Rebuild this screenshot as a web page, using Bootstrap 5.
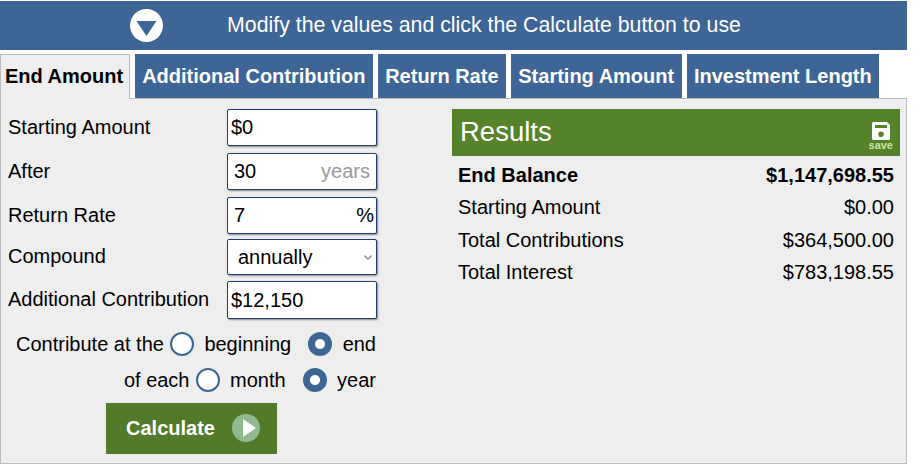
<!DOCTYPE html>
<html lang="en"><head><meta charset="utf-8"><title>Investment Calculator</title>
<link href="https://cdn.jsdelivr.net/npm/bootstrap@5.3.0/dist/css/bootstrap.min.css" rel="stylesheet">
<style>
html,body{background:#fff}
body{font-family:"Liberation Sans",Arial,sans-serif;font-size:20px;color:#000;width:907px;padding-top:1px;overflow:hidden}
.banner{background:#3d6595;color:#fff;height:49px;gap:64px;padding-right:36px;font-size:21.3px}
.tabrow{margin-top:4px;height:44px;gap:5px;position:relative;z-index:1}
.tabitem{background:#3d6595;color:#fff;font-weight:700;height:44px;padding:0 7.75px 0 7px;line-height:44px;text-decoration:none;white-space:nowrap}
.tabitem:hover{color:#fff}
.tabitem.on{background:#eee;color:#000;border:1px solid #bbb;border-bottom:0;padding:0 6px 0 4px;line-height:43px;height:45px}
.panelbox{background:#eee;border:1px solid #bbb;height:366px;padding:10px 6px 0 6px;gap:74px}
.leftcol{width:371px}
.frow{height:37px;margin-bottom:7px}
.frow.r3{margin-bottom:5px}
.frow.r4{height:36px;margin-bottom:6px}
.frow.r5{height:38px;margin-bottom:0}
.frow label{width:220px;flex:none;padding:0 0 2px 1px}
.inwrap{width:150px;height:100%;position:relative;flex:none}
.leftcol .form-control,.leftcol .form-select{font-size:20px;width:150px;height:100%;color:#000;border:1px solid #1f3f77;border-radius:2px;box-shadow:1px 1px 2px #888;padding:0 3px;font-family:inherit;line-height:1.2}
.leftcol .form-control.pad{padding-left:6px}
.leftcol .form-select{padding:0 0 0 10px;background-image:url("data:image/svg+xml,%3csvg xmlns='http://www.w3.org/2000/svg' viewBox='0 0 16 16'%3e%3cpath fill='none' stroke='%23777' stroke-linecap='round' stroke-linejoin='round' stroke-width='2' d='m2 5 6 6 6-6'/%3e%3c/svg%3e");background-position:right 3px center;background-size:10px 9px}
.unit{position:absolute;right:7px;top:6px;color:#999;line-height:24px}
.unit.pct{right:3px;color:#000}
.radrow{justify-content:flex-end;height:24px;padding-right:2px;white-space:nowrap}
.radrow.a{margin-top:13px}
.radrow.b{margin-top:12px}
.leftcol .form-check-input{width:24px;height:24px;margin:0 10.500px 0 6px;border:2px solid #3d6595;background-color:#fff;background-image:none;flex:none}
.leftcol .form-check-input:checked{background:radial-gradient(circle,#fff 0 4.5px,#3d6595 5.5px);border-color:#3d6595}
.radrow .sp{margin-right:11px}
.calcbtn{background:#527a2b;color:#fff;font-weight:700;font-size:20px;width:171px;height:51px;border:0;border-radius:0;margin:11px 0 0 99px;gap:17px;padding:0 0 1px 3px}
.calcbtn:hover{background:#527a2b;color:#fff}
.rightcol{width:448px}
.resbar{background:#56822a;color:#fff;height:47px;font-size:27.5px;padding:0 7px 2px 8px}
.savebox{color:#c6e6a8;font-size:11px;font-weight:700;line-height:9px;text-align:center;margin-top:8px}
.savebox svg{display:block;margin:0 auto 1px}
.restable{margin:3px 0 0;font-size:20px;--bs-table-bg:transparent}
.restable td{padding:0 6px;height:32.3px;border:0;line-height:32px;color:#000}
</style></head><body>
<div class="banner d-flex align-items-center justify-content-center">
<svg width="33" height="33" viewBox="0 0 33 33" aria-hidden="true"><circle cx="16.5" cy="16.5" r="16.5" fill="#fff"/><path d="M6.500 12H26.500L16.500 27Z" fill="#3d6595"/></svg>
<span>Modify the values and click the Calculate button to use</span></div>
<div class="tabrow d-flex">
<a class="tabitem on" href="#">End Amount</a><a class="tabitem" href="#">Additional Contribution</a><a class="tabitem" href="#">Return Rate</a><a class="tabitem" href="#">Starting Amount</a><a class="tabitem" href="#">Investment Length</a>
</div>
<div class="panelbox d-flex">
<form class="leftcol">
<div class="frow d-flex align-items-center"><label>Starting Amount</label><div class="inwrap"><input class="form-control" value="$0"></div></div>
<div class="frow d-flex align-items-center"><label>After</label><div class="inwrap"><input class="form-control pad" value="30"><span class="unit">years</span></div></div>
<div class="frow r3 d-flex align-items-center"><label>Return Rate</label><div class="inwrap"><input class="form-control pad" value="7"><span class="unit pct">%</span></div></div>
<div class="frow r4 d-flex align-items-center"><label>Compound</label><div class="inwrap"><select class="form-select"><option>annually</option></select></div></div>
<div class="frow r5 d-flex align-items-center"><label>Additional Contribution</label><div class="inwrap"><input class="form-control" value="$12,150"></div></div>
<div class="radrow a d-flex align-items-center"><span>Contribute at the</span><input class="form-check-input" type="radio" name="w"><span class="sp">beginning</span><input class="form-check-input" type="radio" name="w" checked><span>end</span></div>
<div class="radrow b d-flex align-items-center"><span>of each</span><input class="form-check-input" type="radio" name="p"><span class="sp">month</span><input class="form-check-input" type="radio" name="p" checked><span>year</span></div>
<button type="button" class="btn calcbtn d-flex align-items-center justify-content-center">Calculate
<svg width="28" height="28" viewBox="0 0 28 28" aria-hidden="true"><circle cx="14" cy="14" r="14" fill="#8fb98e"/><path d="M11 5L24 14L11 23Z" fill="#fff"/></svg></button>
</form>
<div class="rightcol">
<div class="resbar d-flex justify-content-between align-items-center"><span>Results</span>
<div class="savebox"><svg width="18" height="18" viewBox="0 0 18 18" aria-hidden="true"><path fill-rule="evenodd" d="M1.500 0H15L18 3V16.500A1.500 1.500 0 0 1 16.500 18H1.500A1.500 1.500 0 0 1 0 16.500V1.500A1.500 1.500 0 0 1 1.500 0ZM3 3V6H15V3ZM9 9.500a2.800 2.800 0 1 0 0 5.600a2.800 2.800 0 0 0 0-5.600Z" fill="#fff"/></svg>save</div></div>
<table class="table restable"><tbody>
<tr><td class="fw-bold">End Balance</td><td class="fw-bold text-end">$1,147,698.55</td></tr>
<tr><td>Starting Amount</td><td class="text-end">$0.00</td></tr>
<tr><td>Total Contributions</td><td class="text-end">$364,500.00</td></tr>
<tr><td>Total Interest</td><td class="text-end">$783,198.55</td></tr>
</tbody></table>
</div></div>
</body></html>
